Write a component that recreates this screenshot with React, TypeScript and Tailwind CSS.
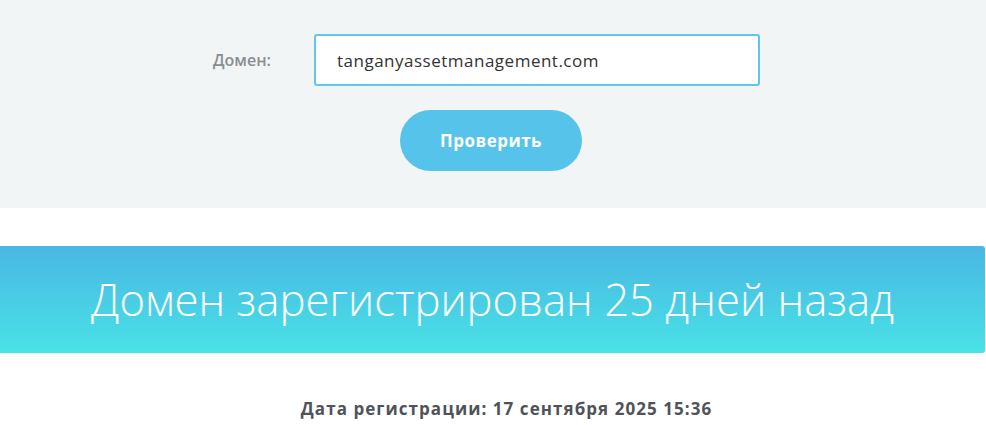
export default function App() {
  return (
    <div className="min-h-screen bg-white font-['Open_Sans','Noto_Sans',sans-serif]">
      <section className="h-[208px] bg-[#f2f5f6] pt-[34px]">
        <div className="flex items-center">
          <label className="ml-[213px] w-[101px] text-[16px] font-semibold text-[#8a8d90]">Домен:</label>
          <input
            defaultValue="tanganyassetmanagement.com"
            className="h-[52px] w-[446px] rounded-[3px] border-2 border-[#5fc6ec] bg-white pl-[21px] text-[17px] tracking-[0.5px] text-[#333] outline-none"
          />
        </div>
        <div className="mt-6 flex">
          <button className="ml-[400px] h-[61px] w-[182px] rounded-full bg-[#55c3ea] text-[17px] font-bold tracking-[0.5px] text-white">
            Проверить
          </button>
        </div>
      </section>
      <div className="mt-[38px] flex h-[107px] w-[985px] items-center justify-center rounded-r-[3px] bg-gradient-to-b from-[#49b7e3] to-[#49e2e6]">
        <h1 className="text-[43.7px] font-light text-white">Домен зарегистрирован 25 дней назад</h1>
      </div>
      <p className="mt-[43px] pl-[27px] text-center text-[17px] font-bold tracking-[1.05px] text-[#4f5358]">
        Дата регистрации: 17 сентября 2025 15:36
      </p>
    </div>
  );
}
